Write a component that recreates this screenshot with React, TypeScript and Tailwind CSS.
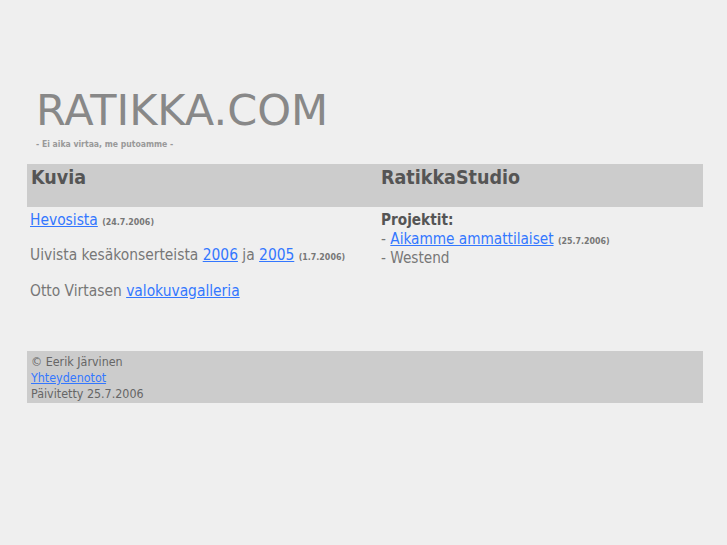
export default function App() {
  const font = { fontFamily: '"DejaVu Sans", Verdana, sans-serif' };
  const cond = { fontFamily: '"DejaVu Sans Condensed", "DejaVu Sans", sans-serif' };
  return (
    <div className="min-h-[545px] w-full bg-[#efefef] text-[#777]" style={font}>
      <div className="ml-[27px] w-[676px] pt-[85px]">
        {/* Logo */}
        <div className="pl-[9px]">
          <h1 className="text-[43px] leading-[50px] text-[#888] font-normal">RATIKKA.COM</h1>
          <p className="text-[8.6px] leading-[14px] font-bold text-[#999] font-stretch-condensed mt-[2px]" style={cond}>
            - Ei aika virtaa, me putoamme -
          </p>
        </div>

        <div style={cond} className="font-stretch-condensed">
          {/* Columns */}
          <div className="mt-[13px] grid grid-cols-[350px_1fr]">
            <div className="h-[43px] bg-[#cccccc] px-[4px] pt-[3px]">
              <h2 className="text-[19.5px] font-bold text-[#555] leading-[22px]">Kuvia</h2>
            </div>
            <div className="h-[43px] bg-[#cccccc] px-[4px] pt-[3px]">
              <h2 className="text-[19.5px] font-bold text-[#555] leading-[22px]">RatikkaStudio</h2>
            </div>

            <div className="px-[3px] pt-[4px] text-[15.4px] leading-[19px]">
              <p>
                <a href="#" className="text-[#3377ff] underline">Hevosista</a>{" "}
                <span className="text-[8.8px] leading-none font-bold text-[#777]">(24.7.2006)</span>
              </p>
              <p className="mt-[16px]">
                Uivista kesäkonserteista{" "}
                <a href="#" className="text-[#3377ff] underline">2006</a> ja{" "}
                <a href="#" className="text-[#3377ff] underline">2005</a>{" "}
                <span className="text-[8.8px] leading-none font-bold text-[#777]">(1.7.2006)</span>
              </p>
              <p className="mt-[17px]">
                Otto Virtasen{" "}
                <a href="#" className="text-[#3377ff] underline">valokuvagalleria</a>
              </p>
            </div>
            <div className="px-[4px] pt-[4px] text-[15.2px] leading-[19px]">
              <p className="font-bold text-[#555]">Projektit:</p>
              <p>
                - <a href="#" className="text-[#3377ff] underline">Aikamme ammattilaiset</a>{" "}
                <span className="text-[8.8px] leading-none font-bold text-[#777]">(25.7.2006)</span>
              </p>
              <p>- Westend</p>
            </div>
          </div>

          {/* Footer */}
          <div className="mt-[50px] h-[52px] bg-[#cccccc] px-[4px] pt-[3px] text-[12.4px] leading-[16px] text-[#666]">
            <p>© Eerik Järvinen</p>
            <p>
              <a href="#" className="text-[#3377ff] underline">Yhteydenotot</a>
            </p>
            <p>Päivitetty 25.7.2006</p>
          </div>
        </div>
      </div>
    </div>
  );
}
